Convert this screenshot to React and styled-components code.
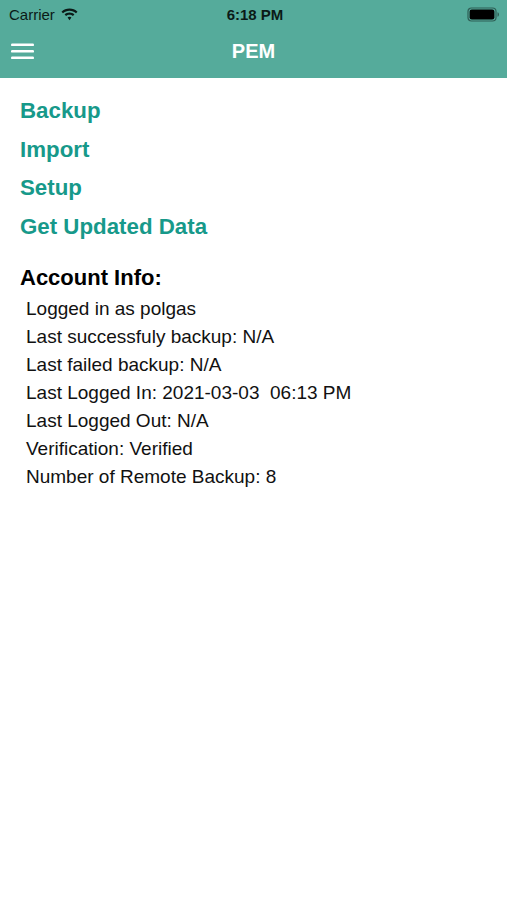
import React from "react";
import styled, { createGlobalStyle } from "styled-components";

const Global = createGlobalStyle`
  html, body { margin: 0; padding: 0; background: #ffffff; }
  body { font-family: "Liberation Sans", Arial, sans-serif; }
`;

const Page = styled.div`
  width: 507px;
  min-height: 900px;
  background: #ffffff;
`;

const Header = styled.header`
  background: #55ab9b;
  height: 78px;
  display: flex;
  flex-direction: column;
`;

const StatusBar = styled.div`
  height: 28px;
  display: grid;
  grid-template-columns: 1fr auto 1fr;
  align-items: center;
  padding: 0 6px 0 9px;
  color: #0b1a17;
  font-size: 15px;
`;

const Carrier = styled.div`
  display: flex;
  align-items: center;
  gap: 6px;
`;

const Time = styled.div`
  font-weight: bold;
  font-size: 15px;
`;

const Right = styled.div`
  display: flex;
  justify-content: flex-end;
`;

const NavBar = styled.div`
  flex: 1;
  display: grid;
  grid-template-columns: 60px 1fr 60px;
  align-items: center;
  padding-bottom: 3px;
`;

const MenuButton = styled.div`
  padding-left: 11px;
  display: flex;
`;

const Title = styled.div`
  text-align: center;
  color: #ffffff;
  font-weight: bold;
  font-size: 20px;
`;

const Content = styled.main`
  padding: 14px 20px 0 20px;
`;

const Links = styled.nav`
  display: flex;
  flex-direction: column;
`;

const LinkItem = styled.div`
  color: #17998a;
  font-weight: bold;
  font-size: 22.3px;
  line-height: 38.7px;
`;

const SectionTitle = styled.h2`
  margin: 17px 0 0 0;
  font-size: 22px;
  font-weight: bold;
  color: #000;
  line-height: 28px;
`;

const InfoList = styled.div`
  margin-top: 3px;
  padding-left: 6px;
  display: flex;
  flex-direction: column;
`;

const InfoRow = styled.div`
  font-size: 19px;
  color: #111;
  line-height: 28px;
  white-space: pre;
`;

const Wifi = () => (
  <svg width="17" height="13" viewBox="0 0 17 13">
    <path d="M8.5 0.5C5.4 0.5 2.6 1.7 0.5 3.7L2 5.3C3.7 3.7 6 2.7 8.5 2.7S13.3 3.7 15 5.3L16.5 3.7C14.4 1.7 11.6 0.5 8.5 0.5Z" fill="#0b1a17" />
    <path d="M8.5 4.6C6.6 4.6 4.9 5.3 3.6 6.5L5.1 8.1C6 7.3 7.2 6.8 8.5 6.8S11 7.3 11.9 8.1L13.4 6.5C12.1 5.3 10.4 4.6 8.5 4.6Z" fill="#0b1a17" />
    <path d="M8.5 8.7C7.7 8.7 7 9 6.6 9.5L8.5 12.2L10.4 9.5C10 9 9.3 8.7 8.5 8.7Z" fill="#0b1a17" />
  </svg>
);

const Battery = () => (
  <svg width="34" height="15" viewBox="0 0 34 15">
    <rect x="1" y="1" width="28" height="13" rx="3.5" fill="none" stroke="#2f5f56" strokeWidth="1.2" />
    <rect x="2.6" y="2.6" width="24.8" height="9.8" rx="2.2" fill="#000" />
    <path d="M30.5 5.2v4.6c0.9-0.3 1.5-1.2 1.5-2.3s-0.6-2-1.5-2.3z" fill="#2f5f56" />
  </svg>
);

const Hamburger = () => (
  <svg width="23" height="17" viewBox="0 0 23 17">
    <rect x="0" y="0.5" width="23" height="2.6" rx="1.2" fill="#fff" />
    <rect x="0" y="7" width="23" height="2.6" rx="1.2" fill="#fff" />
    <rect x="0" y="13.5" width="23" height="2.6" rx="1.2" fill="#fff" />
  </svg>
);

const links = ["Backup", "Import", "Setup", "Get Updated Data"];
const info = [
  "Logged in as polgas",
  "Last successfuly backup: N/A",
  "Last failed backup: N/A",
  "Last Logged In: 2021-03-03  06:13 PM",
  "Last Logged Out: N/A",
  "Verification: Verified",
  "Number of Remote Backup: 8",
];

export default function App() {
  return (
    <Page>
      <Global />
      <Header>
        <StatusBar>
          <Carrier>
            <span>Carrier</span>
            <Wifi />
          </Carrier>
          <Time>6:18 PM</Time>
          <Right>
            <Battery />
          </Right>
        </StatusBar>
        <NavBar>
          <MenuButton>
            <Hamburger />
          </MenuButton>
          <Title>PEM</Title>
          <div />
        </NavBar>
      </Header>
      <Content>
        <Links>
          {links.map((l) => (
            <LinkItem key={l}>{l}</LinkItem>
          ))}
        </Links>
        <SectionTitle>Account Info:</SectionTitle>
        <InfoList>
          {info.map((t) => (
            <InfoRow key={t}>{t}</InfoRow>
          ))}
        </InfoList>
      </Content>
    </Page>
  );
}
